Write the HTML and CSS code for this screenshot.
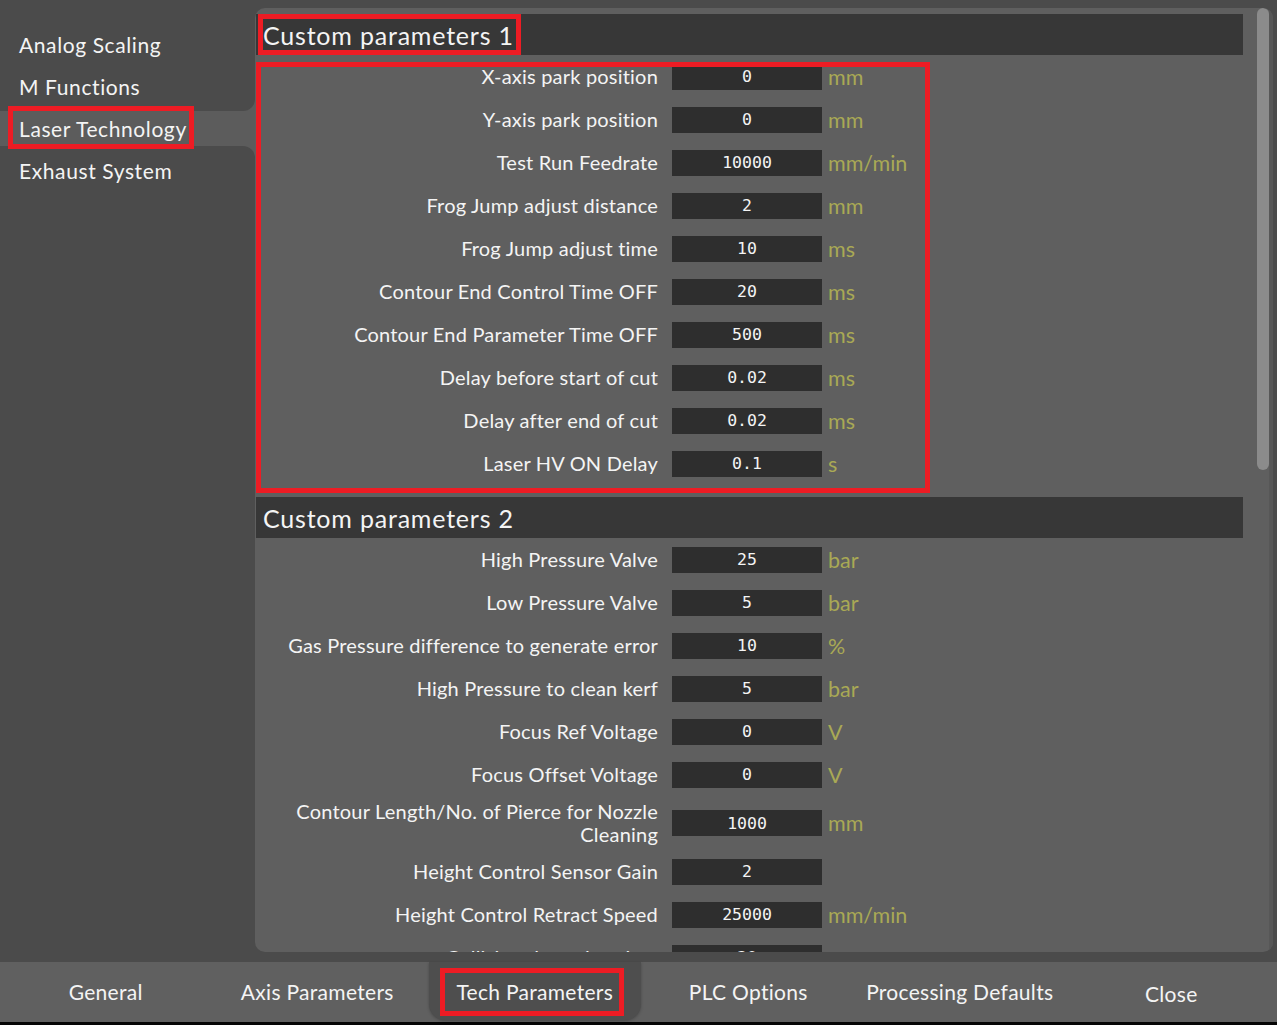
FILE: index.html
```html
<!DOCTYPE html>
<html>
<head>
<meta charset="utf-8">
<link rel="stylesheet" href="styles.css">
</head>
<body>
<div class="app">
  <div class="main">
    <nav class="sidebar">
      <div class="side-group side-top">
        <div class="side-item">Analog Scaling</div>
        <div class="side-item">M Functions</div>
      </div>
      <div class="side-item side-selected mark">Laser Technology</div>
      <div class="side-group side-bottom">
        <div class="side-item">Exhaust System</div>
      </div>
    </nav>
    <div class="panel-wrap">
      <div class="panel">
        <div class="content">
          <section class="section">
            <div class="sec-head mark-title"><span class="sec-title">Custom parameters 1</span></div>
            <div class="rows mark-rows">
              <div class="row"><div class="label">X-axis park position</div><div class="value">0</div><div class="unit">mm</div></div>
              <div class="row"><div class="label">Y-axis park position</div><div class="value">0</div><div class="unit">mm</div></div>
              <div class="row"><div class="label">Test Run Feedrate</div><div class="value">10000</div><div class="unit">mm/min</div></div>
              <div class="row"><div class="label">Frog Jump adjust distance</div><div class="value">2</div><div class="unit">mm</div></div>
              <div class="row"><div class="label">Frog Jump adjust time</div><div class="value">10</div><div class="unit">ms</div></div>
              <div class="row"><div class="label">Contour End Control Time OFF</div><div class="value">20</div><div class="unit">ms</div></div>
              <div class="row"><div class="label">Contour End Parameter Time OFF</div><div class="value">500</div><div class="unit">ms</div></div>
              <div class="row"><div class="label">Delay before start of cut</div><div class="value">0.02</div><div class="unit">ms</div></div>
              <div class="row"><div class="label">Delay after end of cut</div><div class="value">0.02</div><div class="unit">ms</div></div>
              <div class="row"><div class="label">Laser HV ON Delay</div><div class="value">0.1</div><div class="unit">s</div></div>
            </div>
          </section>
          <section class="section">
            <div class="sec-head"><span class="sec-title">Custom parameters 2</span></div>
            <div class="rows">
              <div class="row"><div class="label">High Pressure Valve</div><div class="value">25</div><div class="unit">bar</div></div>
              <div class="row"><div class="label">Low Pressure Valve</div><div class="value">5</div><div class="unit">bar</div></div>
              <div class="row"><div class="label">Gas Pressure difference to generate error</div><div class="value">10</div><div class="unit">%</div></div>
              <div class="row"><div class="label">High Pressure to clean kerf</div><div class="value">5</div><div class="unit">bar</div></div>
              <div class="row"><div class="label">Focus Ref Voltage</div><div class="value">0</div><div class="unit">V</div></div>
              <div class="row"><div class="label">Focus Offset Voltage</div><div class="value">0</div><div class="unit">V</div></div>
              <div class="row"><div class="label">Contour Length/No. of Pierce for Nozzle Cleaning</div><div class="value">1000</div><div class="unit">mm</div></div>
              <div class="row"><div class="label">Height Control Sensor Gain</div><div class="value">2</div><div class="unit"></div></div>
              <div class="row"><div class="label">Height Control Retract Speed</div><div class="value">25000</div><div class="unit">mm/min</div></div>
              <div class="row"><div class="label">Collision detection time</div><div class="value">30</div><div class="unit">ms</div></div>
            </div>
          </section>
        </div>
        <div class="scrollbar"><div class="thumb"></div></div>
      </div>
    </div>
  </div>
  <footer class="tabbar">
    <div class="tab">General</div>
    <div class="tab">Axis Parameters</div>
    <div class="tab tab-active"><span class="tab-bg mark-tab">Tech Parameters</span></div>
    <div class="tab">PLC Options</div>
    <div class="tab">Processing Defaults</div>
    <div class="tab tab-close">Close</div>
  </footer>
</div>
</body>
</html>
```

FILE: styles.css
```css
*, *::before, *::after { box-sizing: border-box; }

html, body {
  margin: 0;
  padding: 0;
  background: #4b4b4b;
  width: 1277px;
  height: 1025px;
  overflow: hidden;
  font-family: "Lato", "Noto Sans", sans-serif;
  color: #f4f4f4;
}

.app {
  display: flex;
  flex-direction: column;
  height: 1025px;
}

.main {
  display: flex;
  height: 962px;
}

/* ---------- sidebar ---------- */
.sidebar {
  width: 255px;
  flex: none;
  display: flex;
  flex-direction: column;
  background: #5c5c5c;
}

.side-group {
  background: #4b4b4b;
}

.side-top {
  padding: 23px 0 4px;
  border-bottom-right-radius: 12px;
}

.side-bottom {
  flex: 1;
  padding-top: 3px;
  border-top-right-radius: 12px;
}

.side-item {
  height: 42px;
  display: flex;
  align-items: center;
  padding-left: 19px;
  font-size: 21px;
  letter-spacing: 0.6px;
  white-space: nowrap;
}

.side-selected {
  height: 35px;
  position: relative;
}

.mark::after {
  content: "";
  position: absolute;
  left: 8px;
  top: -5px;
  width: 186px;
  height: 43px;
  border: 5px solid #ed1c24;
}

/* ---------- panel ---------- */
.panel-wrap {
  flex: 1;
  padding: 8px 4px 10px 0;
}

.panel {
  height: 100%;
  background: #5f5f5f;
  border-radius: 10px;
  display: flex;
  overflow: hidden;
}

.content {
  flex: 1;
  padding: 6px 0 0 1px;
  overflow: hidden;
}

.scrollbar {
  width: 30px;
  flex: none;
  padding-left: 14px;
  display: flex;
  border-right: 4px solid #575757;
}

.thumb {
  width: 12px;
  height: 462px;
  background: #8b8b8b;
  border-radius: 6px;
}

.section {
  margin-bottom: 12px;
}

.sec-head {
  height: 41px;
  background: #373737;
  display: flex;
  align-items: center;
  padding-left: 7px;
  font-size: 25px;
  letter-spacing: 0.8px;
  position: relative;
}

.mark-title::after {
  content: "";
  position: absolute;
  left: 2px;
  top: 0;
  width: 263px;
  height: 41px;
  border: 5px solid #ed1c24;
}

.rows {
  position: relative;
}

.mark-rows::after {
  content: "";
  position: absolute;
  left: 0;
  top: 7px;
  width: 674px;
  height: 431px;
  border: 5px solid #ed1c24;
}

.row {
  display: flex;
  align-items: center;
  padding: 4px 0;
  min-height: 43px;
}

.label {
  width: 402px;
  flex: none;
  padding-left: 20px;
  text-align: right;
  font-size: 20px;
  letter-spacing: 0.2px;
  line-height: 23px;
}

.value {
  width: 150px;
  height: 26px;
  flex: none;
  margin-left: 14px;
  background: #2e2e2e;
  font-family: "DejaVu Sans Mono", monospace;
  font-size: 16.5px;
  display: flex;
  align-items: center;
  justify-content: center;
}

.unit {
  margin-left: 6px;
  font-size: 21.5px;
  color: #a9a955;
}

/* ---------- bottom tabs ---------- */
.tabbar {
  height: 63px;
  display: flex;
  background: #606060;
  border-bottom: 3px solid #050505;
}

.tab {
  flex: 1;
  display: flex;
  align-items: center;
  justify-content: center;
  font-size: 21px;
  letter-spacing: 0.3px;
  padding-bottom: 2px;
}

.tab-close {
  padding-top: 4px;
}

.tab-active {
  padding: 0 2px 2px 6px;
  align-items: stretch;
}

.tab-bg {
  flex: 1;
  background: #4e4e4e;
  border-radius: 0 0 16px 16px;
  box-shadow: 0 1px 3px rgba(0,0,0,0.25);
  display: flex;
  align-items: center;
  justify-content: center;
  position: relative;
}

.mark-tab::after {
  content: "";
  position: absolute;
  left: 11px;
  top: 6px;
  width: 184px;
  height: 48px;
  border: 5px solid #ed1c24;
}
```
